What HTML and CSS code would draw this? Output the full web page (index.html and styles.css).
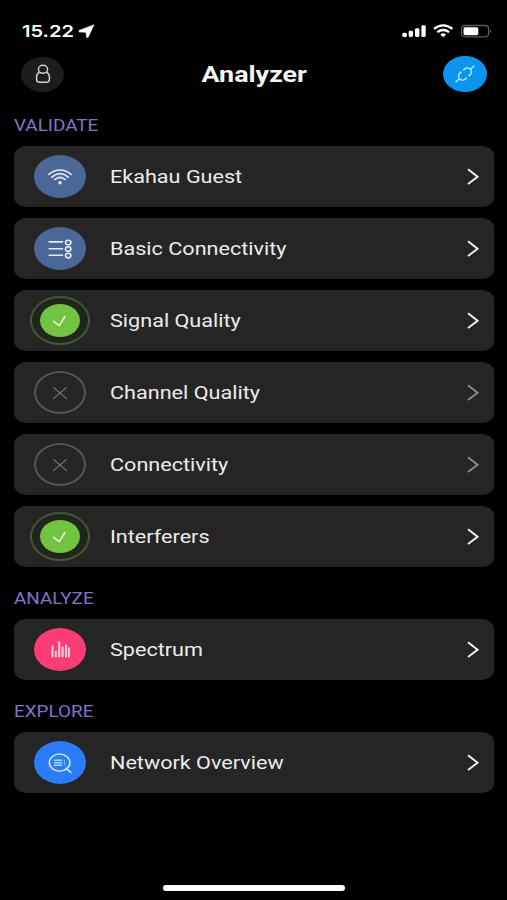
FILE: index.html
```html
<!DOCTYPE html>
<html lang="en">
<head>
    <meta charset="UTF-8">
    <meta name="viewport" content="width=device-width, initial-scale=1.0">
    <title>Analyzer</title>
    <link rel="stylesheet" href="styles.css">
</head>
<body>
    <div class="status-bar">
        <span class="time">15.22</span>
        <svg class="location" width="17" height="15" viewBox="0 0 17 15"><path d="M16 0.8 L1 6.4 Q0.4 7.6 1.4 7.9 L8 8.3 L8.6 13.2 Q9.2 14.2 10.2 13.2 Z" fill="#fff" stroke="#fff" stroke-width="0.6"/></svg>
        <svg class="signals" width="90" height="16" viewBox="0 0 90 16">
            <g fill="#fff">
                <rect x="0.3" y="9.8" width="4.6" height="4.2" rx="1.6"/>
                <rect x="6.7" y="7.8" width="4.3" height="6.2" rx="1.4"/>
                <rect x="13" y="5.2" width="4.4" height="8.8" rx="1.4"/>
                <rect x="19.4" y="2.3" width="4.3" height="11.7" rx="1.4"/>
            </g>
            <g fill="none" stroke="#fff" stroke-width="2.3">
                <path d="M32 5.9 Q41.2 -1.1 50.4 5.9"/>
                <path d="M35.3 9.2 Q41.2 4.8 47.1 9.2"/>
            </g>
            <path d="M38.3 11.4 Q41.2 9.3 44.1 11.4 L41.2 14.2 Z" fill="#fff"/>
            <rect x="59.6" y="2.5" width="27" height="11.3" rx="3.2" fill="none" stroke="#5c5c5c" stroke-width="1.3"/>
            <rect x="61.5" y="4.2" width="14.8" height="8" rx="1.8" fill="#fff"/>
            <path d="M88 6.2 Q90 8.1 88 10 Z" fill="#777"/>
        </svg>
    </div>

    <header class="header">
        <div class="round profile">
            <svg width="16" height="20" viewBox="0 0 16 20" fill="none" stroke="#d0d0d0" stroke-width="1.5">
                <ellipse cx="8" cy="5.3" rx="4.6" ry="4"/>
                <path d="M4.6 8.2 Q1.6 9.8 1.6 13 V15.6 Q1.6 18.3 4.6 18.3 H11.4 Q14.4 18.3 14.4 15.6 V13 Q14.4 9.8 11.4 8.2"/>
            </svg>
        </div>
        <h1 class="title">Analyzer</h1>
        <div class="round connect">
            <svg width="24" height="20" viewBox="0 0 24 20">
                <g transform="translate(12 10) rotate(-41)" fill="none" stroke="#b5edff" stroke-width="1.5">
                    <path d="M-1.2 -4 H-3.2 A4 4 0 0 0 -3.2 4 H-1.2 M-12.6 0 H-7.2"/>
                    <path d="M1.2 -4 H3.2 A4 4 0 0 1 3.2 4 H1.2 M7.2 0 H12.6"/>
                </g>
            </svg>
        </div>
    </header>

    <h2 class="section"><span>VALIDATE</span></h2>
    <div class="list">
        <div class="card">
            <div class="icon slate">
                <svg width="26" height="18" viewBox="0 0 26 18" fill="none" stroke="#e4edf6" stroke-width="1.6" stroke-linecap="round">
                    <path d="M1.8 6.3 Q13 -2.3 24.2 6.3"/>
                    <path d="M4.7 9.1 Q13 2.2 21.3 9.1"/>
                    <path d="M7.7 11.6 Q13 7 18.3 11.6"/>
                    <circle cx="13" cy="14.7" r="1.7" fill="#e4edf6" stroke="none"/>
                </svg>
            </div>
            <span class="label">Ekahau Guest</span>
            <svg class="arrow" width="14" height="20" viewBox="0 0 14 20"><path d="M2 2.2 L11.6 9.7 L2 17"/></svg>
        </div>
        <div class="card">
            <div class="icon slate">
                <svg width="26" height="22" viewBox="0 0 26 22" fill="none" stroke="#e4edf6" stroke-width="1.6" stroke-linecap="round">
                    <path d="M2.2 3.9 H15.5 M2.2 10.7 H15.5 M2.2 17.3 H15.5"/>
                    <ellipse cx="21.2" cy="4.5" rx="2.7" ry="2.3"/>
                    <ellipse cx="21.2" cy="11" rx="2.7" ry="2.3"/>
                    <ellipse cx="21.2" cy="17.6" rx="2.7" ry="2.3"/>
                </svg>
            </div>
            <span class="label">Basic Connectivity</span>
            <svg class="arrow" width="14" height="20" viewBox="0 0 14 20"><path d="M2 2.2 L11.6 9.7 L2 17"/></svg>
        </div>
        <div class="card">
            <div class="icon ring">
                <div class="passed">
                    <svg width="16" height="14" viewBox="0 0 16 14"><path d="M1.2 7.2 L7.3 11.6 L13.2 2" fill="none" stroke="#e3f7d3" stroke-width="1.6"/></svg>
                </div>
            </div>
            <span class="label">Signal Quality</span>
            <svg class="arrow" width="14" height="20" viewBox="0 0 14 20"><path d="M2 2.2 L11.6 9.7 L2 17"/></svg>
        </div>
        <div class="card">
            <div class="icon skipped">
                <svg width="16" height="14" viewBox="0 0 16 14"><path d="M1.2 1.3 L14.8 12.7 M14.8 1.3 L1.2 12.7" stroke="#6c6c6c" stroke-width="1.4"/></svg>
            </div>
            <span class="label">Channel Quality</span>
            <svg class="arrow dim" width="14" height="20" viewBox="0 0 14 20"><path d="M2 2.2 L11.6 9.7 L2 17"/></svg>
        </div>
        <div class="card">
            <div class="icon skipped">
                <svg width="16" height="14" viewBox="0 0 16 14"><path d="M1.2 1.3 L14.8 12.7 M14.8 1.3 L1.2 12.7" stroke="#6c6c6c" stroke-width="1.4"/></svg>
            </div>
            <span class="label">Connectivity</span>
            <svg class="arrow dim" width="14" height="20" viewBox="0 0 14 20"><path d="M2 2.2 L11.6 9.7 L2 17"/></svg>
        </div>
        <div class="card">
            <div class="icon ring">
                <div class="passed">
                    <svg width="16" height="14" viewBox="0 0 16 14"><path d="M1.2 7.2 L7.3 11.6 L13.2 2" fill="none" stroke="#e3f7d3" stroke-width="1.6"/></svg>
                </div>
            </div>
            <span class="label">Interferers</span>
            <svg class="arrow" width="14" height="20" viewBox="0 0 14 20"><path d="M2 2.2 L11.6 9.7 L2 17"/></svg>
        </div>
    </div>

    <h2 class="section"><span>ANALYZE</span></h2>
    <div class="list">
        <div class="card">
            <div class="icon pink">
                <svg width="20" height="18" viewBox="0 0 20 18" stroke="#ffcfdf" stroke-width="2">
                    <path d="M2.4 4.5 V16.3 M5.8 10 V16.3 M9.2 0.6 V16.3 M12.6 5.8 V16.3 M16 3.5 V16.3 M19 6.5 V16.3"/>
                </svg>
            </div>
            <span class="label">Spectrum</span>
            <svg class="arrow" width="14" height="20" viewBox="0 0 14 20"><path d="M2 2.2 L11.6 9.7 L2 17"/></svg>
        </div>
    </div>

    <h2 class="section"><span>EXPLORE</span></h2>
    <div class="list">
        <div class="card">
            <div class="icon blue">
                <svg width="26" height="22" viewBox="0 0 26 22" fill="none" stroke="#c6e2ff" stroke-width="1.6" stroke-linecap="round">
                    <ellipse cx="12.6" cy="10.6" rx="10.3" ry="8.6"/>
                    <path d="M18.8 16.2 L23.8 20.4"/>
                    <path d="M7.6 8.2 H14.5 M7.6 10.7 H14.5 M7.6 13.2 H14.5" stroke-width="1.6" opacity="0.85"/>
                    <path d="M17.4 8.4 V13" stroke-width="1.2" opacity="0.6"/>
                </svg>
            </div>
            <span class="label">Network Overview</span>
            <svg class="arrow" width="14" height="20" viewBox="0 0 14 20"><path d="M2 2.2 L11.6 9.7 L2 17"/></svg>
        </div>
    </div>

    <div class="home-bar"></div>
</body>
</html>
```

FILE: styles.css
```css
* {
    box-sizing: border-box;
}
body {
    font-family: Roboto, "Liberation Sans", sans-serif;
    margin: 0;
    height: 900px;
    display: flex;
    flex-direction: column;
    background-color: #000;
    color: #ececec;
    overflow: hidden;
}
svg {
    display: block;
    flex: none;
}
.status-bar {
    height: 52px;
    padding: 10px 15px 0 22px;
    display: flex;
    align-items: center;
}
.time {
    width: 56px;
    font-family: Inter, sans-serif;
    font-size: 16px;
    font-weight: 600;
    color: #fff;
    transform: scaleX(1.25);
    transform-origin: left;
}
.signals {
    margin-left: auto;
}
.header {
    height: 44px;
    padding: 0 20px 0 21px;
    display: flex;
    align-items: center;
    justify-content: space-between;
}
.round {
    width: 43px;
    height: 35px;
    border-radius: 50%;
    display: flex;
    align-items: center;
    justify-content: center;
}
.profile {
    background-color: #1d1d1d;
}
.connect {
    width: 44px;
    height: 36px;
    background-color: #0b95ee;
}
.title {
    margin: 0 0 0 2px;
    font-size: 22px;
    font-weight: 700;
    color: #f5f5f5;
    transform: scaleX(1.22);
}
.section {
    height: 52px;
    margin: 0;
    padding: 22px 14px 0;
    font-size: 16px;
    font-weight: 400;
    line-height: 20px;
    color: #8474c4;
}
.header + .section {
    height: 50px;
    padding-top: 20px;
}
.section span {
    display: inline-block;
    transform: scaleX(1.18);
    transform-origin: left;
}
.list {
    padding: 0 13px 0 14px;
    display: flex;
    flex-direction: column;
    gap: 11px;
}
.card {
    height: 61px;
    padding: 0 14px 0 16px;
    display: flex;
    align-items: center;
    background-color: #252525;
    border-radius: 12px / 10px;
}
.icon {
    width: 52px;
    height: 43px;
    margin: 0 24px 0 4px;
    border-radius: 50%;
    display: flex;
    align-items: center;
    justify-content: center;
}
.slate {
    background-color: #4b6797;
}
.pink {
    background-color: #fb3c77;
}
.blue {
    background-color: #2a7cfa;
}
.skipped {
    border: 2px solid #555;
}
.ring {
    width: 60px;
    height: 49px;
    margin: 0 20px 0 0;
    border: 2px solid #435832;
    background-color: #20251e;
}
.passed {
    width: 40px;
    height: 33px;
    border-radius: 50%;
    background-color: #72c440;
    display: flex;
    align-items: center;
    justify-content: center;
}
.label {
    font-size: 18px;
    white-space: nowrap;
    transform: scaleX(1.2);
    transform-origin: left;
}
.arrow {
    margin-left: auto;
    fill: none;
    stroke: #f2f2f2;
    stroke-width: 1.9;
}
.dim {
    stroke: #8c8c8c;
}
.home-bar {
    width: 182px;
    height: 6px;
    margin: auto auto 9px 163px;
    border-radius: 3px;
    background-color: #fff;
}
```
